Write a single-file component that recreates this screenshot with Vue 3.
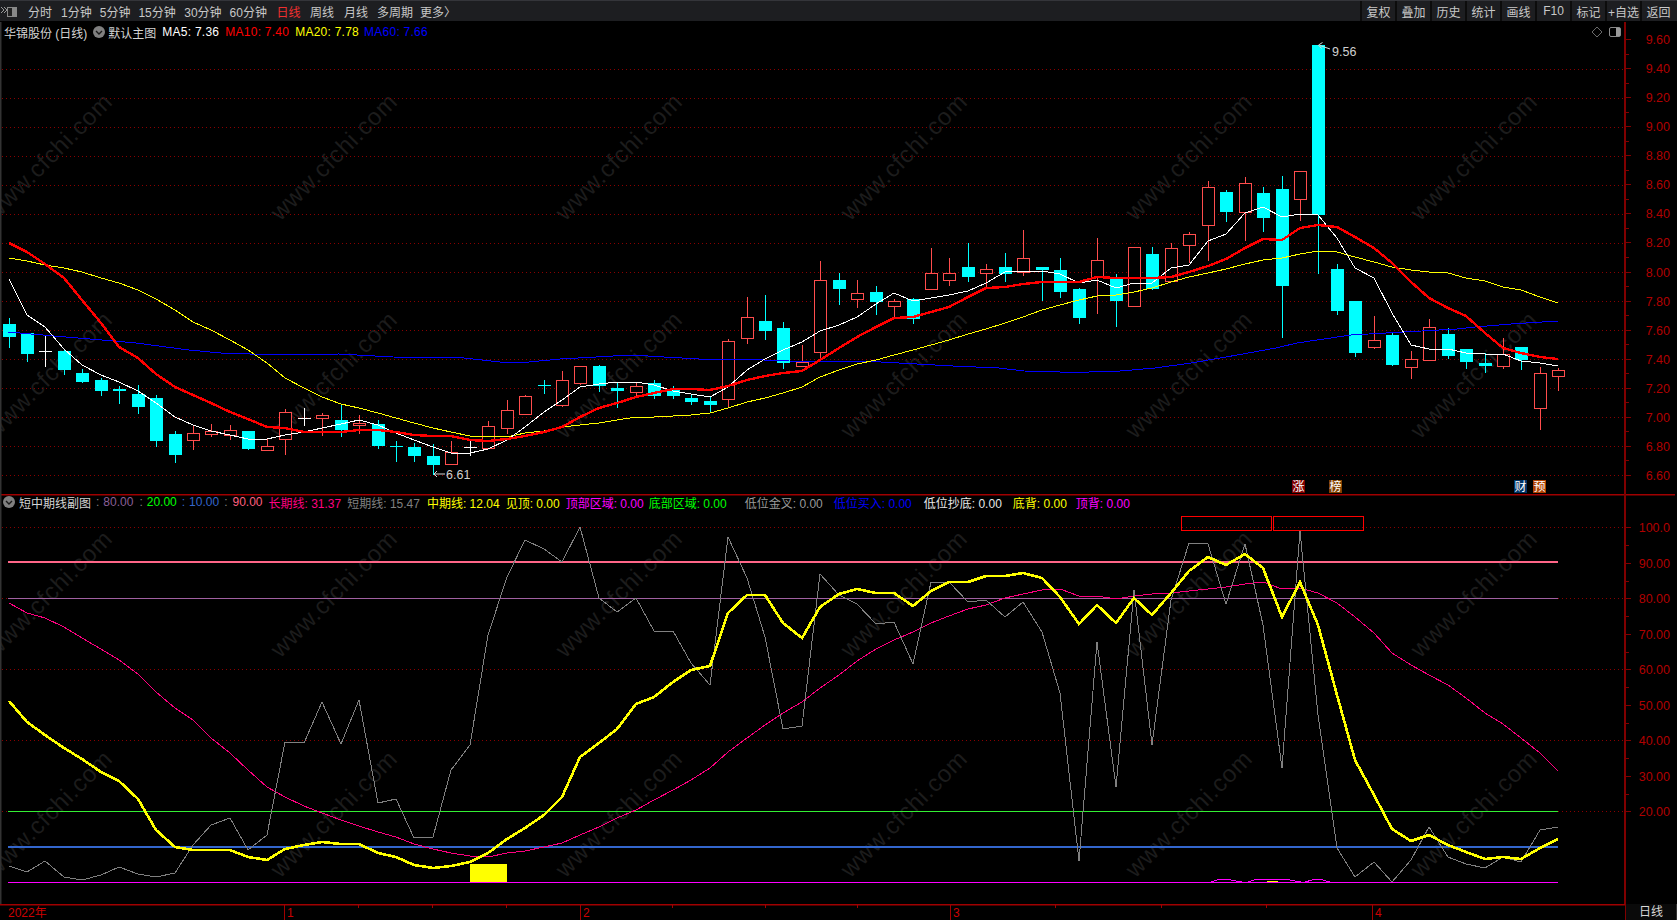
<script setup>
const xOf = (i) => Math.round(8.5 + 18.45 * i)

const raw = [
  [324,337,318,348,'c'],[333,354,333,362,'c'],[351,351,336,367,'w'],[351,370,349,375,'c'],[373,382,369,383,'c'],
  [380,391,378,396,'c'],[389,391,386,404,'c'],[394,407,385,414,'c'],[398,441,395,447,'c'],[434,455,431,463,'c'],
  [433,440,425,450,'r'],[431,434,424,437,'r'],[430,435,425,440,'r'],[431,449,431,450,'c'],[446,450,438,450,'r'],
  [412,439,409,455,'r'],[418,418,408,426,'w'],[415,418,413,436,'r'],[420,430,405,437,'c'],[423,425,415,434,'r'],
  [424,446,420,449,'c'],[446,446,441,462,'c'],[447,456,443,462,'c'],[456,465,444,475,'c'],[452,464,441,464,'r'],
  [447,447,439,456,'w'],[426,448,421,448,'r'],[410,428,400,434,'r'],[396,414,395,414,'r'],[385,385,380,394,'c'],
  [380,405,371,407,'r'],[366,383,366,385,'r'],[366,386,365,392,'c'],[388,391,383,408,'c'],[386,392,382,397,'r'],
  [383,396,380,399,'c'],[390,396,386,399,'c'],[398,402,395,405,'c'],[401,405,397,413,'c'],[341,399,339,407,'r'],
  [317,338,297,344,'r'],[321,331,295,340,'c'],[328,363,322,369,'c'],[362,366,345,367,'r'],[280,352,261,359,'r'],
  [280,289,273,305,'c'],[293,299,280,308,'r'],[292,302,286,315,'c'],[301,306,299,318,'r'],[299,319,298,324,'c'],
  [273,289,248,289,'r'],[273,280,258,286,'r'],[267,277,243,282,'c'],[269,273,264,288,'r'],[267,274,253,282,'c'],
  [258,272,230,276,'r'],[267,270,267,301,'c'],[270,292,258,298,'c'],[289,318,288,324,'c'],[260,277,238,314,'r'],
  [277,301,274,327,'c'],[247,306,247,306,'r'],[254,289,247,290,'c'],[248,281,243,281,'r'],[234,245,232,263,'r'],
  [187,225,181,261,'r'],[192,212,190,222,'c'],[183,212,177,241,'r'],[193,218,187,232,'c'],[189,286,176,338,'c'],
  [171,199,171,221,'r'],[45,215,45,274,'c'],[269,311,264,315,'c'],[301,353,301,357,'c'],[340,347,316,349,'r'],
  [335,365,332,366,'c'],[359,367,351,379,'r'],[327,360,319,360,'r'],[334,356,328,359,'c'],[349,362,349,369,'c'],
  [363,366,353,373,'c'],[354,366,338,369,'r'],[347,360,347,370,'c'],[373,408,367,430,'r'],[370,376,368,391,'r']
]
const colors = { r: '#ff4d4d', c: '#00ffff', w: '#ffffff' }
const candles = raw.map((c, i) => ({
  x: xOf(i), top: c[0], bot: c[1], hi: c[2], lo: c[3], kind: c[4], color: colors[c[4]]
}))

const toPts = (arr) => arr.map((y, i) => `${xOf(i)},${y}`).join(' ')

const ma5 = toPts([279,315,327,349,365,375,382,391,403,417,425,431,435,439,439,435,432,428,424,420,425,433,440,447,453,453,449,440,427,412,400,387,384,382,382,385,391,394,397,387,370,359,350,342,331,325,317,304,293,301,298,295,291,283,272,271,271,274,283,280,288,283,283,268,265,241,234,213,207,217,214,215,238,268,278,313,345,349,349,353,354,354,361,363,366])
const ma10 = toPts([243,252,264,278,300,323,347,358,374,387,395,403,412,419,427,428,432,432,432,430,430,432,435,436,436,440,441,439,436,432,427,417,408,403,397,393,389,389,390,386,380,376,373,371,360,348,337,327,318,317,312,307,297,288,287,284,282,282,282,277,278,278,278,277,272,266,259,248,239,240,228,225,227,237,248,263,282,298,308,316,333,348,353,357,359])
const ma20 = toPts([258,261,265,268,272,278,283,290,299,310,322,330,340,350,363,378,388,397,404,408,413,418,423,428,432,436,436,437,433,431,427,425,423,420,417,417,416,415,413,408,402,398,393,387,377,370,364,360,355,350,345,340,334,329,323,317,310,305,300,296,295,292,288,282,277,273,269,264,260,258,254,251,252,257,262,267,270,272,273,278,281,287,290,297,303])
const ma60 = '8,332 54,336 114,341 136,343 189,350 221,353 279,355 339,354 393,357 464,358 500,362 529,362 560,359 596,357 631,355 664,357 699,359 739,359 789,361 881,362 917,364 953,366 999,368 1024,371 1060,372 1089,372 1120,371 1155,368 1191,363 1226,357 1276,348 1297,343 1351,335 1404,332 1457,329 1475,327 1511,324 1558,321'

const midY = toPts([701,722,735,748,759,772,781,799,830,847,850,850,850,857,860,849,845,842,844,844,853,857,865,868,866,862,853,839,828,815,797,757,743,729,704,697,682,670,666,613,595,595,623,638,607,594,589,593,593,606,591,582,582,576,576,573,578,597,624,605,623,598,615,593,571,557,565,554,568,617,582,625,695,760,795,829,841,835,845,852,859,857,859,848,839])
const shortG = toPts([866,872,861,877,880,875,867,874,877,873,845,825,818,850,835,742,743,702,744,700,803,799,838,837,770,745,635,577,540,549,562,527,598,612,598,631,631,663,685,537,578,637,729,726,574,595,604,624,622,664,582,582,602,600,617,602,632,693,861,642,787,590,745,600,543,544,604,544,625,768,531,715,848,877,862,882,860,827,857,864,868,857,862,830,827])
const longP = toPts([603,613,618,627,638,649,660,674,692,708,720,738,753,770,787,797,806,813,820,826,832,837,844,849,853,856,857,853,851,847,843,835,827,818,810,800,790,780,768,752,738,725,713,702,688,675,661,649,640,632,623,616,609,605,598,594,590,589,596,596,599,596,594,593,591,589,587,584,582,589,588,593,603,617,633,653,665,675,685,698,713,724,738,753,771])
const bumps = '1211,882 1217,880 1226,879 1236,881 1242,882 1248,882 1254,880 1260,879 1285,879 1295,881 1301,882 1305,882 1312,880 1319,879 1330,882'

const mainGrid = Array.from({ length: 15 }, (_, k) => 68.5 + k * 29.07).map(Math.round)
const mainLabels = ['9.60','9.40','9.20','9.00','8.80','8.60','8.40','8.20','8.00','7.80','7.60','7.40','7.20','7.00','6.80','6.60']
  .map((t, k) => ({ t, y: Math.round(39 + k * 29.07) }))
const mainMinor = Array.from({ length: 15 }, (_, k) => Math.round(53.5 + k * 29.07))

const subLabels = ['100.0','90.00','80.00','70.00','60.00','50.00','40.00','30.00','20.00']
  .map((t, k) => ({ t, y: Math.round(527 + k * 35.5) }))
const subMinor = Array.from({ length: 8 }, (_, k) => Math.round(545 + k * 35.5))
const subGrid = [527, 598, 669, 740, 811]

const wmX = [50, 335, 620, 905, 1190, 1475]
const wmMain = [158, 376].flatMap((y) => wmX.map((x) => ({ x, y })))
const wmSub = [595, 815].flatMap((y) => wmX.map((x) => ({ x, y })))

const tabs = [
  { t: '分时', m: 0 }, { t: '1分钟', m: 9 }, { t: '5分钟', m: 8 }, { t: '15分钟', m: 8 }, { t: '30分钟', m: 8.5 },
  { t: '60分钟', m: 8 }, { t: '日线', m: 9.5, c: '#f03030' }, { t: '周线', m: 9.5 }, { t: '月线', m: 10 },
  { t: '多周期', m: 9 }, { t: '更多', m: 7 }, { t: '〉', m: 0 }
]
const tools = ['复权','叠加','历史','统计','画线','F10','标记','+自选','返回']

const maItems = [
  { t: 'MA5: 7.36', c: '#ffffff', m: 6 },
  { t: 'MA10: 7.40', c: '#ff0000', m: 6 },
  { t: 'MA20: 7.78', c: '#ffff00', m: 6 },
  { t: 'MA60: 7.66', c: '#0000ff', m: 5 }
]

const subItems = [
  { t: ':', c: '#808080', m: 5 }, { t: '80.00', c: '#8a5f98', m: 4 },
  { t: ':', c: '#808080', m: 6 }, { t: '20.00', c: '#00ff00', m: 4 },
  { t: ':', c: '#3366cc', m: 5 }, { t: '10.00', c: '#3366cc', m: 4 },
  { t: ':', c: '#808080', m: 5 }, { t: '90.00', c: '#ff5f7f', m: 5 },
  { t: '长期线: 31.37', c: '#ff0080', m: 6 }, { t: '短期线: 15.47', c: '#808080', m: 6 },
  { t: '中期线: 12.04', c: '#ffff00', m: 7 }, { t: '见顶: 0.00', c: '#ffff00', m: 6 },
  { t: '顶部区域: 0.00', c: '#ff00ff', m: 6 }, { t: '底部区域: 0.00', c: '#00ff00', m: 5 },
  { t: '低位金叉: 0.00', c: '#9a9a9a', m: 18 }, { t: '低位买入: 0.00', c: '#0000ff', m: 11 },
  { t: '低位抄底: 0.00', c: '#e8e8e8', m: 12 }, { t: '底背: 0.00', c: '#ffff00', m: 11 },
  { t: '顶背: 0.00', c: '#ff00ff', m: 9 }
]

const badges = [
  { t: '涨', x: 1292, c: '#800000' }, { t: '榜', x: 1329, c: '#804000' },
  { t: '财', x: 1514, c: '#003366' }, { t: '预', x: 1533, c: '#b04000' }
]

const majorTicks = [{ x: 284, t: '1' }, { x: 580, t: '2' }, { x: 950, t: '3' }, { x: 1372, t: '4' }]
const minorTicks = [358, 432, 506, 672, 765, 857, 1055, 1161, 1266]
</script>

<template>
  <div class="page">
    <header class="toolbar">
      <svg class="panel-ico" width="18" height="22" viewBox="0 0 18 22">
        <path d="M1 7l3 3-3 3M4 7l3 3-3 3" fill="none" stroke="#999" stroke-width="1" />
        <rect x="7.5" y="7.5" width="9" height="9" fill="#222" stroke="#888" />
        <rect x="12" y="8" width="4" height="8" fill="#888" />
      </svg>
      <nav class="tabs">
        <span v-for="tab in tabs" :key="tab.t" :style="{ marginLeft: tab.m + 'px', color: tab.c }">{{ tab.t }}</span>
      </nav>
      <div class="tools">
        <button v-for="tool in tools" :key="tool" class="tool">{{ tool }}</button>
      </div>
    </header>

    <section class="pane pane-main">
      <svg width="1677" height="472" viewBox="0 22 1677 472">
        <text v-for="(w, i) in wmMain" :key="i" class="wm" :x="w.x" :y="w.y" text-anchor="middle" dominant-baseline="middle" :transform="`rotate(-45 ${w.x} ${w.y})`">www.cfchi.com</text>
        <line v-for="y in mainGrid" :key="y" :x1="2" :x2="1625" :y1="y + 0.5" :y2="y + 0.5" class="dot" />
        <g shape-rendering="crispEdges">
          <g v-for="c in candles" :key="c.x">
            <line :x1="c.x + 0.5" :x2="c.x + 0.5" :y1="c.hi" :y2="c.lo" :stroke="c.color" />
            <line v-if="c.top === c.bot" :x1="c.x - 6" :x2="c.x + 7" :y1="c.top + 0.5" :y2="c.top + 0.5" :stroke="c.color" />
            <rect v-else-if="c.kind === 'c'" :x="c.x - 6" :y="c.top" width="13" :height="c.bot - c.top" :fill="c.color" />
            <rect v-else :x="c.x - 5.5" :y="c.top + 0.5" width="12" :height="c.bot - c.top" fill="#000" :stroke="c.color" stroke-width="1" />
          </g>
          <polyline :points="ma60" class="ln" stroke="#0000ff" stroke-width="1" />
          <polyline :points="ma20" class="ln" stroke="#ffff00" stroke-width="1" />
          <polyline :points="ma5" class="ln" stroke="#ffffff" stroke-width="1" />
          <polyline :points="ma10" class="ln" stroke="#ff0000" stroke-width="2.4" />
        </g>
        <path d="M1330 49L1320 45.5M1318.5 45l4-2.5M1318.5 45l3 3.5" fill="none" stroke="#d8d8d8" />
        <text x="1332" y="56" class="val">9.56</text>
        <path d="M445 474H434M434 474l3-3M434 474l3 3" fill="none" stroke="#d8d8d8" />
        <text x="446" y="479" class="val">6.61</text>
        <path d="M1597 27l5 5-5 5-5-5z" fill="none" stroke="#6a6a6a" />
        <rect x="1609.5" y="27.5" width="11" height="9" rx="1.5" fill="none" stroke="#8a8a8a" />
        <rect x="1616" y="28" width="4" height="8" fill="#9a9a9a" />
        <g v-for="b in badges" :key="b.t">
          <rect :x="b.x" y="480" width="13" height="13" :fill="b.c" />
          <text :x="b.x + 6.5" y="491" class="badge" text-anchor="middle">{{ b.t }}</text>
        </g>
        <rect x="1624" y="22" width="2" height="472" fill="#800000" />
        <line v-for="l in mainLabels" :key="l.t" x1="1626" x2="1631" :y1="l.y + 0.5" :y2="l.y + 0.5" stroke="#800000" />
        <line v-for="y in mainMinor" :key="y" x1="1626" x2="1629" :y1="y + 0.5" :y2="y + 0.5" stroke="#800000" />
        <text v-for="l in mainLabels" :key="l.t" x="1670" :y="l.y + 5" class="axis" text-anchor="end">{{ l.t }}</text>
        <rect x="0" y="22" width="1.5" height="472" fill="#333" />
      </svg>
      <div class="legend">
        <span class="title title-main">华锦股份 (日线)</span>
        <svg class="chev" width="12" height="12" viewBox="0 0 12 12">
          <circle cx="6" cy="6" r="6" fill="#808080" />
          <path d="M3 5l3 3 3-3" fill="none" stroke="#1a1a1a" stroke-width="1.4" />
        </svg>
        <span class="title title-tpl">默认主图</span>
        <span v-for="m in maItems" :key="m.t" class="ma" :style="{ color: m.c, marginLeft: m.m + 'px' }">{{ m.t }}</span>
      </div>
    </section>

    <section class="pane pane-sub">
      <svg width="1677" height="410" viewBox="0 494 1677 410">
        <text v-for="(w, i) in wmSub" :key="i" class="wm" :x="w.x" :y="w.y" text-anchor="middle" dominant-baseline="middle" :transform="`rotate(-45 ${w.x} ${w.y})`">www.cfchi.com</text>
        <rect x="0" y="494" width="1675" height="1.5" fill="#a00000" />
        <line v-for="y in subGrid" :key="y" x1="2" x2="1625" :y1="y + 0.5" :y2="y + 0.5" class="dot" />
        <g shape-rendering="crispEdges">
          <line x1="8" x2="1558" y1="562" y2="562" stroke="#ff6688" stroke-width="2" />
          <line x1="8" x2="1558" y1="598.5" y2="598.5" stroke="#a060a0" />
          <line x1="8" x2="1558" y1="811.5" y2="811.5" stroke="#33ee33" />
          <line x1="8" x2="1558" y1="847" y2="847" stroke="#3366cc" stroke-width="2" />
          <line x1="8" x2="1558" y1="882.5" y2="882.5" stroke="#ff00ff" />
          <rect x="470" y="864" width="37" height="18" fill="#ffff00" />
          <polyline :points="bumps" class="ln" stroke="#ff00ff" stroke-width="1" />
          <line x1="1267" x2="1278" y1="881" y2="881" stroke="#ffff00" />
          <polyline :points="longP" class="ln" stroke="#ff0080" stroke-width="1" />
          <polyline :points="shortG" class="ln" stroke="#808080" stroke-width="1" />
          <polyline :points="midY" class="ln" stroke="#ffff00" stroke-width="2.6" />
          <rect x="1181.5" y="516.5" width="90" height="14" fill="none" stroke="#ff0000" />
          <rect x="1273.5" y="516.5" width="90" height="14" fill="none" stroke="#ff0000" />
        </g>
        <rect x="1624" y="494" width="2" height="410" fill="#800000" />
        <line v-for="l in subLabels" :key="l.t" x1="1626" x2="1631" :y1="l.y + 0.5" :y2="l.y + 0.5" stroke="#800000" />
        <line v-for="y in subMinor" :key="y" x1="1626" x2="1629" :y1="y + 0.5" :y2="y + 0.5" stroke="#800000" />
        <text v-for="l in subLabels" :key="l.t" x="1670" :y="l.y + 5" class="axis" text-anchor="end">{{ l.t }}</text>
        <rect x="0" y="494" width="1.5" height="410" fill="#333" />
      </svg>
      <div class="legend legend-sub">
        <svg class="chev" width="12" height="12" viewBox="0 0 12 12">
          <circle cx="6" cy="6" r="6" fill="#808080" />
          <path d="M3 5l3 3 3-3" fill="none" stroke="#1a1a1a" stroke-width="1.4" />
        </svg>
        <span class="title title-sub">短中期线副图</span>
        <span v-for="(s, i) in subItems" :key="i" :style="{ color: s.c, marginLeft: s.m + 'px' }">{{ s.t }}</span>
      </div>
    </section>

    <footer class="xaxis">
      <svg width="1625" height="16" viewBox="0 904 1625 16">
        <rect x="0" y="904" width="1625" height="1.5" fill="#a00000" />
        <text x="8" y="917" class="xlabel">2022年</text>
        <g v-for="m in majorTicks" :key="m.t">
          <line :x1="m.x + 0.5" :x2="m.x + 0.5" y1="905" y2="920" stroke="#a00000" />
          <text :x="m.x + 3" y="917" class="xlabel">{{ m.t }}</text>
        </g>
        <line v-for="x in minorTicks" :key="x" :x1="x + 0.5" :x2="x + 0.5" y1="905" y2="908" stroke="#a00000" />
      </svg>
      <div class="period">日线</div>
    </footer>
  </div>
</template>

<style scoped>
.page {
  width: 1677px;
  height: 920px;
  background: #000;
  display: flex;
  flex-direction: column;
  overflow: hidden;
  font: 12px "Liberation Sans", "Noto Sans CJK SC", sans-serif;
}
.toolbar {
  height: 22px;
  flex: none;
  display: flex;
  align-items: stretch;
  background: #1d1e21;
  border-top: 1px solid #34353a;
  border-bottom: 1px solid #000;
  box-sizing: border-box;
  color: #c8c8c8;
}
.panel-ico { flex: none; margin-top: -1px; }
.tabs {
  display: flex;
  align-items: center;
  padding-left: 10px;
  flex: 1;
  white-space: nowrap;
}
.tools { display: flex; margin-right: 2px; }
.tool {
  width: 35px;
  padding: 0;
  background: #1d1e21;
  border: 0;
  border-left: 2px solid #0c0c0c;
  color: #c8c8c8;
  font: inherit;
  white-space: nowrap;
  box-sizing: border-box;
  overflow: hidden;
}
.pane { position: relative; flex: none; }
.pane svg { display: block; }
.pane-main { height: 472px; }
.pane-sub { height: 410px; }
.legend {
  position: absolute;
  top: 0;
  left: 4px;
  height: 20px;
  display: flex;
  align-items: center;
  white-space: nowrap;
}
.legend-sub { top: 0; height: 16px; left: 3px; }
.title { color: #d4d4d4; }
.title-main { margin-right: 6px; }
.title-tpl { margin-left: 3px; }
.title-sub { margin-left: 4px; }
.ma { letter-spacing: 0.25px; }
.wm {
  font: 24px "Liberation Sans", sans-serif;
  letter-spacing: 0.7px;
  fill: #1c1c1c;
}
.dot {
  stroke: #8a0000;
  stroke-width: 1;
  stroke-dasharray: 1 3;
  shape-rendering: crispEdges;
}
.ln { fill: none; }
.val { font: 12.5px "Liberation Sans", sans-serif; fill: #d0d0d0; }
.badge { font: 12px "Noto Sans CJK SC", sans-serif; fill: #fff; }
.axis { font: 12.5px "Liberation Sans", sans-serif; fill: #b00000; }
.xaxis { height: 16px; flex: none; display: flex; }
.xaxis svg { display: block; flex: none; }
.xlabel { font: 12px "Liberation Sans", "Noto Sans CJK SC", sans-serif; fill: #cc0000; }
.period {
  width: 50px;
  color: #d8d8d8;
  text-align: center;
  line-height: 16px;
  border-right: 1px solid #333;
  border-left: 1px solid #800000;
  background: #0a0a0a;
}
</style>

<style>
html, body { margin: 0; background: #000; }
</style>
